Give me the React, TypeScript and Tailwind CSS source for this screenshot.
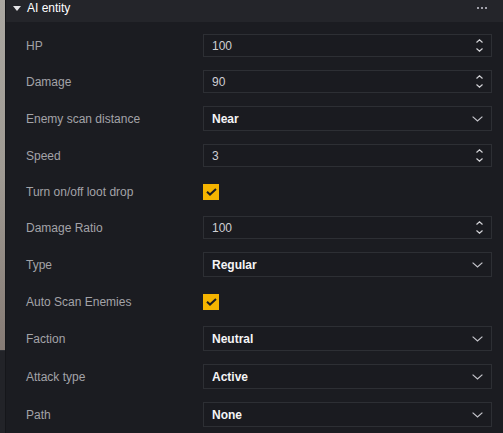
import React from "react";

type Row =
  | { label: string; kind: "number"; value: string }
  | { label: string; kind: "select"; value: string }
  | { label: string; kind: "check" };

const rows: Row[] = [
  { label: "HP", kind: "number", value: "100" },
  { label: "Damage", kind: "number", value: "90" },
  { label: "Enemy scan distance", kind: "select", value: "Near" },
  { label: "Speed", kind: "number", value: "3" },
  { label: "Turn on/off loot drop", kind: "check" },
  { label: "Damage Ratio", kind: "number", value: "100" },
  { label: "Type", kind: "select", value: "Regular" },
  { label: "Auto Scan Enemies", kind: "check" },
  { label: "Faction", kind: "select", value: "Neutral" },
  { label: "Attack type", kind: "select", value: "Active" },
  { label: "Path", kind: "select", value: "None" },
];

function Spinner() {
  return (
    <div className="flex flex-col items-center gap-[5px] mr-[8px]">
      <svg width="7" height="4" viewBox="0 0 7 4" fill="none">
        <polyline points="0.5,3.5 3.5,0.8 6.5,3.5" stroke="#d4d4d8" strokeWidth="1.2" />
      </svg>
      <svg width="7" height="4" viewBox="0 0 7 4" fill="none">
        <polyline points="0.5,0.5 3.5,3.2 6.5,0.5" stroke="#d4d4d8" strokeWidth="1.2" />
      </svg>
    </div>
  );
}

function Chevron() {
  return (
    <svg width="11" height="6" viewBox="0 0 11 6" fill="none" className="mr-[8px]">
      <polyline points="0.6,0.6 5.5,5 10.4,0.6" stroke="#c4c4ca" strokeWidth="1.2" />
    </svg>
  );
}

function Field({ row }: { row: Row }) {
  if (row.kind === "check") {
    return (
      <div className="h-[23px] flex items-center">
        <div className="w-[16px] h-[16px] bg-[#f5b400] flex items-center justify-center">
          <svg width="11" height="8" viewBox="0 0 11 8" fill="none">
            <polyline points="1,3.8 4,6.6 10,1" stroke="#1b1c21" strokeWidth="2" />
          </svg>
        </div>
      </div>
    );
  }
  if (row.kind === "select") {
    return (
      <div className="h-[25px] flex items-center justify-between border border-[#2d2f34] bg-[#1a1b20]">
        <span className="pl-[8px] text-[12px] font-bold text-[#f4f4f5]">{row.value}</span>
        <Chevron />
      </div>
    );
  }
  return (
    <div className="h-[23px] flex items-center justify-between border border-[#2d2f34] bg-[#1a1b20]">
      <span className="pl-[8px] text-[12px] text-[#cfcfd3]">{row.value}</span>
      <Spinner />
    </div>
  );
}

export default function App() {
  return (
    <div
      className="w-[503px] h-[433px] flex overflow-hidden bg-[#1b1c21]"
      style={{ fontFamily: '"Liberation Sans", Arial, sans-serif' }}
    >
      <div className="w-[5px] flex flex-col shrink-0">
        <div className="h-[350px] bg-gradient-to-b from-[#aaa7a1] via-[#9f9a93] to-[#867b75]" />
        <div className="flex-1 bg-[#222328] border-t border-[#2e3035]" />
      </div>
      <div className="w-[1px] bg-[#15161a] shrink-0" />
      <div className="flex-1 flex flex-col">
        <div className="h-[22px] bg-[#24252a] flex items-start justify-between shrink-0">
          <div className="flex items-center h-[16px]">
            <svg width="8" height="5" viewBox="0 0 8 5" className="ml-[7px] mr-[6px]">
              <polygon points="0,0 8,0 4,5" fill="#e4e4e7" />
            </svg>
            <span className="text-[12px] leading-4 text-white">AI entity</span>
          </div>
          <div className="flex gap-[2px] items-center h-[16px] mr-[16px]">
            <span className="w-[2px] h-[2px] bg-[#a1a1aa]" />
            <span className="w-[2px] h-[2px] bg-[#a1a1aa]" />
            <span className="w-[2px] h-[2px] bg-[#a1a1aa]" />
          </div>
        </div>
        <div className="flex flex-col gap-[13px] pt-[12px] pl-[20px] pr-[11px]">
          {rows.map((row) => (
            <div key={row.label} className="flex items-center">
              <div className="w-[177px] shrink-0 text-[12px] text-[#a3a3a8]">{row.label}</div>
              <div className="flex-1">
                <Field row={row} />
              </div>
            </div>
          ))}
        </div>
      </div>
    </div>
  );
}
